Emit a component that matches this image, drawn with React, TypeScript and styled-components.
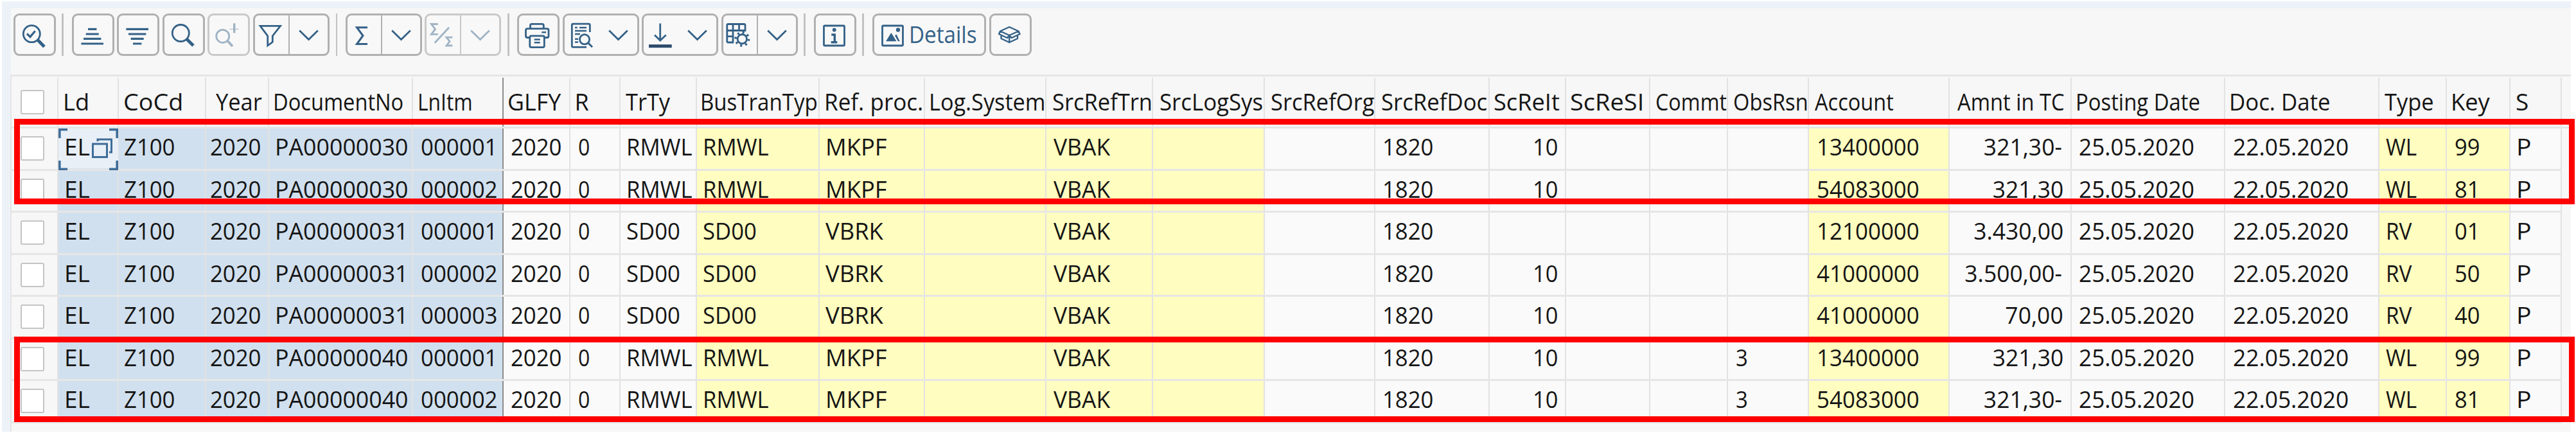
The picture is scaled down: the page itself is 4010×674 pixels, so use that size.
import type { ReactNode } from 'react'
import styled, { createGlobalStyle, css } from 'styled-components'

const FONT = '"Open Sans", "Noto Sans", sans-serif'
const FONT_SIZE = 36

const GlobalStyle = createGlobalStyle`
    body{
        margin: 0;
        background: #fff;
        font-family: ${FONT};
        font-size: ${FONT_SIZE}px;
        color: #151515;
        overflow: hidden;
    }
    *{
        box-sizing: border-box;
    }
`

const WindowStyled = styled.div`
    width: 3999px;
    height: 670px;
    margin: 2px 0 0 3px;
    padding: 11px 0 0 14px;
    background: #ecf2f8;
`

const PanelStyled = styled.div`
    height: 659px;
    background: #f7f7f7;
`

// ######## toolbar

const ToolbarStyled = styled.div`
    display: flex;
    gap: 4.6px;
    height: 103px;
    padding: 7.5px 0 0 3.7px;
`

const SeparatorStyled = styled.div`
    width: 2.6px;
    height: 66px;
    margin: 0 8px 0 5.2px;
    background: #c2c2c2;
`

const ButtonStyled = styled.button<{ $disabled?: boolean; $width?: number }>`
    display: flex;
    flex: none;
    align-items: center;
    width: ${({ $width }) => $width ?? 66}px;
    height: 66px;
    padding: 0;
    border: 3px solid ${({ $disabled }) => ($disabled ? '#c9c9c9' : '#b0b0b0')};
    border-radius: 9px;
    background: #f8f8f8;
    color: #346187;
    font: inherit;

    svg{
        display: block;
        flex: none;
        fill: none;
        stroke: currentColor;
        stroke-width: 2.8;
        opacity: ${({ $disabled }) => ($disabled ? 0.45 : 1)};
    }
`

const ArrowStyled = styled.span<{ $divided?: boolean; $disabled?: boolean }>`
    height: 60px;
    border-left: 2.5px solid transparent;

    ${({ $divided, $disabled }) => $divided && css`
        border-left-color: ${$disabled ? '#c9c9c9' : '#b0b0b0'};
    `}
`

type ToolProps = {
    children: ReactNode
    disabled?: boolean
    divided?: boolean
}

const Tool = ({ children, disabled }: ToolProps) => (
    <ButtonStyled $disabled={disabled}>
        <svg width="60" height="60" viewBox="3 3 60 60">{children}</svg>
    </ButtonStyled>
)

const MenuTool = ({ children, disabled, divided }: ToolProps) => (
    <ButtonStyled $disabled={disabled} $width={118.9}>
        <svg width="52" height="60" viewBox="3 3 52 60">{children}</svg>
        <ArrowStyled $divided={divided} $disabled={disabled}>
            <svg width="58" height="60" viewBox="57.5 3 58 60">
                <path d="M72.7 26.5 87 40.5 101.3 26.5" />
            </svg>
        </ArrowStyled>
    </ButtonStyled>
)

const Toolbar = () => (
    <ToolbarStyled>
        <Tool>
            <circle cx="28.3" cy="31.7" r="13" />
            <path d="M21 31.5 26 36.3 33.7 27.3" strokeWidth="3.2" />
            <path d="M37.5 41 48 51.7" strokeWidth="5" />
        </Tool>
        <SeparatorStyled />
        <Tool>
            <path d="M25 24.3H38.4M21.7 32H41.7M18 39.3H45.4M14.4 47H49" strokeWidth="3.2" />
        </Tool>
        <Tool>
            <path d="M14.4 24.3H49M18 32H45.4M21.7 39.3H41.7M25 47H38.4" strokeWidth="3.2" />
        </Tool>
        <Tool>
            <circle cx="28.3" cy="30.5" r="13" />
            <path d="M37 39.3 48 50" strokeWidth="5" />
        </Tool>
        <Tool disabled>
            <circle cx="23.7" cy="35.3" r="10" />
            <path d="M31 42.5 39 51" strokeWidth="3.6" />
            <path d="M41.7 15.3V30.3" strokeWidth="3.4" />
            <path d="M34.5 24.3H48.5" strokeWidth="1" />
        </Tool>
        <MenuTool divided>
            <path d="M11 19.3H42.5L30.3 35V44.3L22.7 50V35Z" />
        </MenuTool>
        <SeparatorStyled />
        <MenuTool divided>
            <path d="M34 21.7H17.5L27 34.5 17.5 47.5H34" strokeWidth="3" />
        </MenuTool>
        <MenuTool divided disabled>
            <path d="M20.7 16.5H10.5L16.5 24.4 10.5 32.3H20.7" />
            <path d="M38 21.7 15.7 45.7" />
            <path d="M43.3 37.2H34L39 43.5 34 50H43.3" />
        </MenuTool>
        <SeparatorStyled />
        <Tool>
            <path d="M20.5 23.5V18.5Q20.5 16.3 22.5 16.3H39Q41.3 16.3 41.3 18.5V23.5" />
            <path d="M19.5 37.5H16Q13.5 37.5 13.5 35V26.3Q13.5 23.7 16 23.7H46.5Q49 23.7 49 26.3V35Q49 37.5 46.5 37.5H42.5" />
            <rect x="19.8" y="34.8" width="22.5" height="17.8" rx="2" />
            <path d="M26.7 40.5H35.7M26.7 45.3H35.7M38.3 29.3H45" strokeWidth="2.6" />
        </Tool>
        <MenuTool>
            <path d="M42.3 29V18Q42.3 16.2 40.3 16.2H16.3Q14.3 16.2 14.3 18V50.5Q14.3 52.3 16.3 52.3H37" />
            <path d="M19 22H22.7M26 22H37M19 27H37M19 32H27M19 39.7H24M19 44.5H24" strokeWidth="2.4" />
            <circle cx="34" cy="40.3" r="7.6" />
            <path d="M39.5 45.8 46 52.3" strokeWidth="3" />
        </MenuTool>
        <MenuTool>
            <path d="M28.7 15.5V42M20 33.5 28.7 42 37.7 33.5" />
            <path d="M11 50.7H46.7" stroke="#2b4a6b" strokeWidth="5" />
        </MenuTool>
        <MenuTool divided>
            <path d="M19 45H10.5Q8.8 45 8.8 43.3V18Q8.8 16.5 10.5 16.5H35Q37 16.5 37 18V26.5H8.8M8.8 35.7H19.5M18 16.5V45M27.5 16.5V26.5" />
            <circle cx="32.3" cy="39.7" r="7.2" />
            <circle cx="32.3" cy="39.7" r="10.2" strokeWidth="3.6" strokeDasharray="3 5.01" />
        </MenuTool>
        <SeparatorStyled />
        <Tool>
            <rect x="15.5" y="19" width="32" height="31" rx="1.5" />
            <circle cx="31.7" cy="25.5" r="2.9" fill="currentColor" stroke="none" />
            <path d="M27.3 33H32.3V44.5M26.7 44.8H36.3" strokeWidth="3.4" />
        </Tool>
        <SeparatorStyled />
        <ButtonStyled $width={177.3}>
            <svg width="55" height="60" viewBox="3 3 55 60">
                <rect x="15.5" y="19" width="32" height="31" rx="1.5" />
                <path d="M21 43.3 29.3 30 37.5 43.3ZM35 34.5 37.5 32.5 42.7 43.3H40Z" fill="currentColor" stroke="none" />
                <circle cx="40" cy="25.5" r="3.2" fill="currentColor" stroke="none" />
            </svg>
            <Fitted text="Details" left={2} width={101.7} />
        </ButtonStyled>
        <Tool>
            <path d="M31.2 21 45.5 27.5 31.2 34 17 27.5ZM17 27.5 15 32 28 38 31.2 34 34.5 38 47.5 32 45.5 27.5M18.5 34V39L31.2 45 44 39V34M31.2 34V45" strokeWidth="2.4" strokeLinejoin="round" />
        </Tool>
    </ToolbarStyled>
)

// ######## text

const FittedStyled = styled.span<{ $shift: number; $scale: number; $lift?: number }>`
    flex: none;
    margin-left: ${({ $shift }) => $shift}px;
    padding-bottom: ${({ $lift }) => $lift ?? 0}px;
    transform: scaleX(${({ $scale }) => $scale});
    transform-origin: left;
    white-space: pre;
    line-height: 48px;
`

const canvas = document.createElement('canvas').getContext('2d')!

// scale that gives the sample this ink width, and where the text must start
const fit = (sample: string, left: number, width: number) => {
    canvas.font = `${FONT_SIZE}px ${FONT}`
    // every digit has the advance of a zero
    const m = canvas.measureText(sample.replace(/\d/g, '0'))
    const scale = width / (m.actualBoundingBoxRight + m.actualBoundingBoxLeft)
    return { scale, shift: left + m.actualBoundingBoxLeft * scale }
}

type FittedProps = {
    text: string
    sample?: string
    left: number
    width: number
    lift?: number
}

const Fitted = ({ text, sample, left, width, lift }: FittedProps) => {
    const { scale, shift } = fit(sample ?? text, left, width)
    return <FittedStyled $scale={scale} $shift={shift} $lift={lift}>{text}</FittedStyled>
}

// ######## grid

type Tone = 'key' | 'calc' | 'plain'

type Column = {
    label: string
    end: number
    x: number
    w: number
    vx?: number
    vw?: number
    tone?: Tone
}

// end: right line, x / w: label ink, vx / vw: ink of the first value
const columns: Column[] = [
    { label: 'Ld', end: 183.5, x: 100.7, w: 35, vx: 103, vw: 36, tone: 'key' },
    { label: 'CoCd', end: 320, x: 194, w: 88, vx: 194, vw: 77, tone: 'key' },
    { label: 'Year', end: 418, x: 336, w: 72, vx: 327.7, vw: 77, tone: 'key' },
    { label: 'DocumentNo', end: 642, x: 427.5, w: 199, vx: 431, vw: 203, tone: 'key' },
    { label: 'LnItm', end: 783, x: 652.5, w: 81, vx: 656.3, vw: 117, tone: 'key' },
    { label: 'GLFY', end: 887, x: 792, w: 82, vx: 796.2, vw: 77 },
    { label: 'R', end: 965, x: 897.5, w: 19, vx: 900.7, vw: 16 },
    { label: 'TrTy', end: 1083.5, x: 974, w: 70, vx: 978, vw: 99 },
    { label: 'BusTranTyp', end: 1275, x: 1093, w: 179, vx: 1097, vw: 99, tone: 'calc' },
    { label: 'Ref. proc.', end: 1439, x: 1285.5, w: 149, vx: 1288, vw: 92, tone: 'calc' },
    { label: 'Log.System', end: 1628, x: 1449, w: 176.5, tone: 'calc' },
    { label: 'SrcRefTrn', end: 1794, x: 1638.6, w: 153, vx: 1640, vw: 89, tone: 'calc' },
    { label: 'SrcLogSys', end: 1968, x: 1805.7, w: 159, tone: 'calc' },
    { label: 'SrcRefOrg', end: 2139.5, x: 1979, w: 160 },
    { label: 'SrcRefDoc', end: 2318, x: 2150.7, w: 164, vx: 2152.5, vw: 77 },
    { label: 'ScReIt', end: 2437, x: 2326.5, w: 101, vx: 2386.6, vw: 36.8 },
    { label: 'ScReSI', end: 2568, x: 2445, w: 111 },
    { label: 'Commt', end: 2689, x: 2579, w: 108.5 },
    { label: 'ObsRsn', end: 2815, x: 2699.5, w: 113, vx: 2702.5, vw: 16.5 },
    { label: 'Account', end: 3034, x: 2825, w: 122, vx: 2828.7, vw: 157.3, tone: 'calc' },
    { label: 'Amnt in TC', end: 3223.5, x: 3046.6, w: 166 },
    { label: 'Posting Date', end: 3463, x: 3234, w: 190, vx: 3237, vw: 177.3 },
    { label: 'Doc. Date', end: 3702.6, x: 3472.7, w: 153.5, vx: 3476.5, vw: 177.7 },
    { label: 'Type', end: 3808.5, x: 3712, w: 75.5, vx: 3714, vw: 47.5, tone: 'calc' },
    { label: 'Key', end: 3906.7, x: 3818, w: 58.7, vx: 3821.5, vw: 37, tone: 'calc' },
    { label: 'S', end: 3987, x: 3917.5, w: 18.5, vx: 3920, vw: 18.5 },
]

// document, line, type, ref. proc., item, obsolete reason, account, amount, doc. type, key
const documents = [
    ['PA00000030', '000001', 'RMWL', 'MKPF', '10', '', '13400000', '321,30-', 'WL', '99'],
    ['PA00000030', '000002', 'RMWL', 'MKPF', '10', '', '54083000', '321,30', 'WL', '81'],
    ['PA00000031', '000001', 'SD00', 'VBRK', '', '', '12100000', '3.430,00', 'RV', '01'],
    ['PA00000031', '000002', 'SD00', 'VBRK', '10', '', '41000000', '3.500,00-', 'RV', '50'],
    ['PA00000031', '000003', 'SD00', 'VBRK', '10', '', '41000000', '70,00', 'RV', '40'],
    ['PA00000040', '000001', 'RMWL', 'MKPF', '10', '3', '13400000', '321,30', 'WL', '99'],
    ['PA00000040', '000002', 'RMWL', 'MKPF', '10', '3', '54083000', '321,30-', 'WL', '81'],
]

const rows = documents.map(([doc, line, type, ref, item, obs, account, amount, docType, key]) => [
    'EL', 'Z100', '2020', doc, line, '2020', '0', type, type, ref, '', 'VBAK', '', '',
    '1820', item, '', '', obs, account, amount, '25.05.2020', '22.05.2020', docType, key, 'P',
])

const FROZEN = 4
const AMOUNT = 20

const samples = columns.map((_, i) => rows.find((row) => row[i])?.[i])
const starts = [90, ...columns.map((c) => c.end)]
const template = `73px ${columns.map((c, i) => `${c.end - starts[i]}px`).join(' ')}`

const TONES = {
    key: '#d1e0ee',
    calc: '#fffdbf',
    plain: '#fafafa',
}

const TableStyled = styled.div`
    position: relative;
    height: 556px;
    border-left: 2px solid #e4e4e4;
    margin-left: -1px;
`

const HeaderStyled = styled.div`
    display: grid;
    grid-template-columns: ${template};
    height: 84px;
    padding-top: 2px;
    border-top: 3px solid #e6e6e6;
    border-bottom: 3px solid #e6e6e6;
`

const RowStyled = styled.div`
    display: grid;
    grid-template-columns: ${template};
    width: 3970px;
    height: 65.5px;
    border-bottom: 3px solid #e6e6e6;
`

const CellStyled = styled.div<{ $tone?: Tone; $right?: boolean; $frozen?: boolean }>`
    display: flex;
    position: relative;
    align-items: center;
    justify-content: ${({ $right }) => ($right ? 'flex-end' : 'flex-start')};
    min-width: 0;
    border-right: 2px solid ${({ $frozen }) => ($frozen ? '#8c8c8c' : '#e2e2e2')};
    background: ${({ $tone }) => ($tone ? TONES[$tone] : 'transparent')};
`

const BoxCellStyled = styled(CellStyled)`
    padding-left: 13.5px;
`

const CheckboxStyled = styled.span`
    width: 37px;
    height: 38px;
    border: 2.5px solid #c4c4c4;
    border-radius: 3px;
    background: #fff;
`

const AmountStyled = styled.span<{ $end: number }>`
    padding-bottom: 4px;
    margin-right: ${({ $end }) => $end}px;
    transform: scaleX(0.985);
    transform-origin: right;
    line-height: 48px;
`

const FocusStyled = styled.svg`
    position: absolute;
    left: 0;
    top: 0;
    fill: none;
    stroke: #3f6d98;
`

const MarkStyled = styled.div<{ $top: number; $height: number }>`
    position: absolute;
    left: 4px;
    top: ${({ $top }) => $top}px;
    width: 3986px;
    height: ${({ $height }) => $height}px;
    border: 9.5px solid #ff0000;
`

const Focus = () => (
    <FocusStyled width="93" height="65" viewBox="0 0 93 65">
        <rect width="93" height="62" fill="#e8eff6" stroke="none" />
        <path d="M1.8 15V1.8H14M79 1.8H91.2V15M91.2 50V63.2H79M14 63.2H1.8V50" strokeWidth="3.6" />
        <rect x="53.5" y="24" width="22" height="20.5" strokeWidth="3" />
        <path d="M61 20V17H82.5V37H79" strokeWidth="3" />
    </FocusStyled>
)

const Table = () => (
    <TableStyled>
        <HeaderStyled>
            <BoxCellStyled><CheckboxStyled /></BoxCellStyled>
            {columns.map((c, i) => (
                <CellStyled key={c.label} $frozen={i === FROZEN}>
                    <Fitted text={c.label} left={c.x - starts[i] - 1} width={c.w} />
                </CellStyled>
            ))}
        </HeaderStyled>
        {rows.map((row, r) => (
            <RowStyled key={r}>
                <BoxCellStyled><CheckboxStyled /></BoxCellStyled>
                {columns.map((c, i) => (
                    <CellStyled key={c.label} $tone={c.tone ?? 'plain'} $frozen={i === FROZEN} $right={i === AMOUNT}>
                        {i === 0 && r === 0 && <Focus />}
                        {i === AMOUNT && <AmountStyled $end={row[i].endsWith('-') ? 13 : 10.5}>{row[i]}</AmountStyled>}
                        {c.vx && c.vw && row[i] && (
                            <Fitted text={row[i]} sample={samples[i]} left={c.vx - starts[i] - 1} width={c.vw} lift={4} />
                        )}
                    </CellStyled>
                ))}
            </RowStyled>
        ))}
        <MarkStyled $top={69} $height={133} />
        <MarkStyled $top={408} $height={133} />
    </TableStyled>
)

export default function App() {
    return (
        <>
            <GlobalStyle />
            <WindowStyled>
                <PanelStyled>
                    <Toolbar />
                    <Table />
                </PanelStyled>
            </WindowStyled>
        </>
    )
}
